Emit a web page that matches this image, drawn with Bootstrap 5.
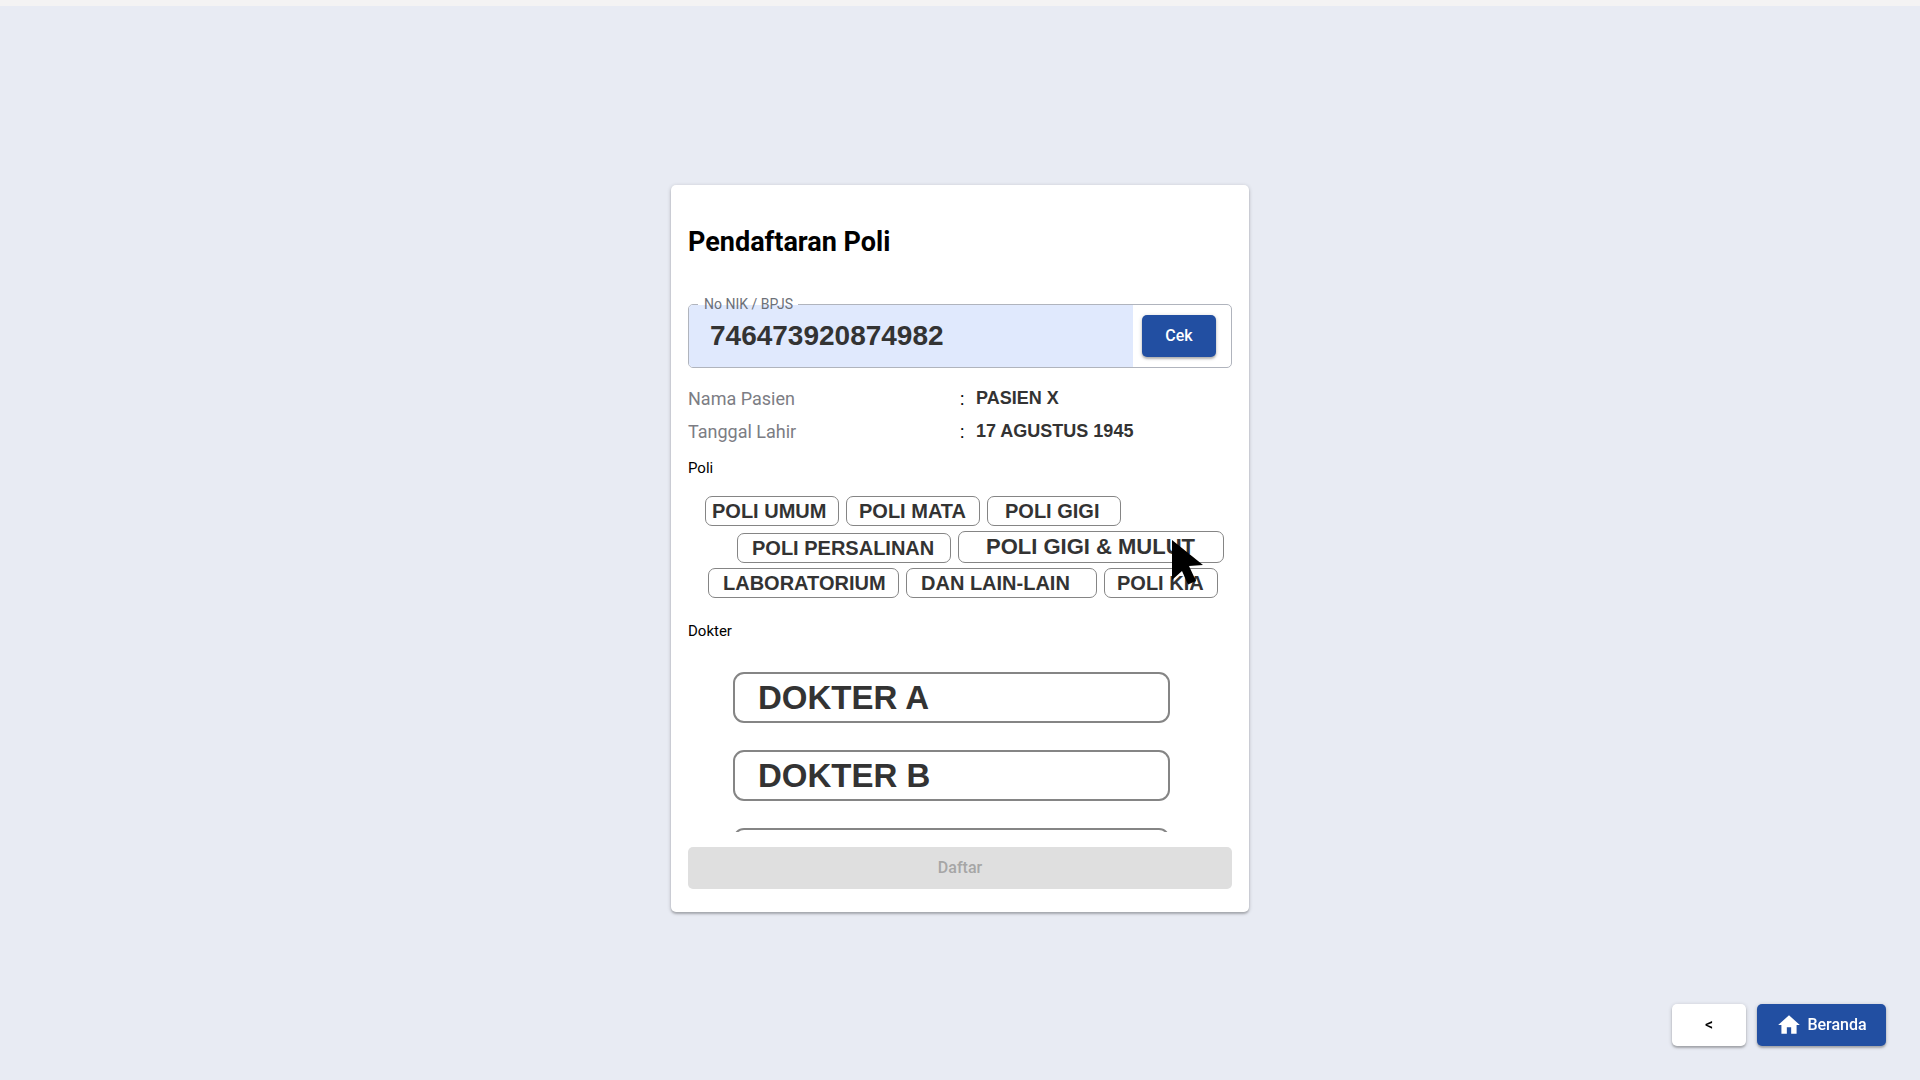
<!DOCTYPE html>
<html lang="id">
<head>
<meta charset="utf-8">
<meta name="viewport" content="width=device-width, initial-scale=1">
<title>Pendaftaran Poli</title>
<link href="https://cdn.jsdelivr.net/npm/bootstrap@5.3.0/dist/css/bootstrap.min.css" rel="stylesheet">
<style>
  body { background: #e8ebf3; color: #000; font-family: Roboto, "Liberation Sans", sans-serif; }
  .top-strip { height: 6px; background: #f4f3f3; }
  .stage { padding: 10px 16px 0; }
  .panel { width: 100%; max-width: 578px; padding: 35px 17px 23px; background: #fff; border-radius: 5px;
    box-shadow: 0 2px 2px rgba(0,0,0,.18), 0 1px 4px rgba(0,0,0,.2); }
  .panel-title { font-size: 27px; line-height: 44px; font-weight: 700; margin-bottom: 40px; }
  .data-text { font-family: "Liberation Sans", Arial, sans-serif; font-weight: 700; color: #333; }

  .nik-field { height: 64px; border: 1px solid #b0b4bd; border-radius: 5px; margin-bottom: 14px; }
  .nik-field label { top: -11px; left: 9px; padding: 0 5px 0 6px; font-size: 14px; line-height: 20px; color: #6c7078;
    background: linear-gradient(#fff 11px, #e0e9fd 11px); }
  .nik-input { min-width: 0; border: 0; border-radius: 4px 0 0 4px; background: #e0e9fd; padding: 0 21px; font-size: 28px; }
  .nik-side { width: 98px; padding-left: 9px; }

  .action { height: 42px; border: 0; border-radius: 5px; font-size: 16px; line-height: 24px; font-weight: 500; }
  .raised { box-shadow: 0 2px 2px rgba(0,0,0,.2), 0 1px 4px rgba(0,0,0,.2); }
  .action-blue, .action-blue:hover { background: #224fa2; color: #fff; }
  .action-white, .action-white:hover { background: #fff; color: #000; }
  .action-short { width: 74px; }
  .action:disabled { background: #dfdfdf; color: #a6a6a6; opacity: 1; }

  .facts { font-size: 18px; line-height: 33px; }
  .facts dt { width: 50%; font-weight: 400; color: #7c7d84; }
  .facts dd { margin: 0; }
  .facts .colon { width: 16px; }
  .group-title { font-size: 15px; line-height: 24px; font-weight: 400; }

  .choice { background: #fff; border: 1px solid #858585; text-align: left; white-space: nowrap; }
  .poli-list { padding: 16px 0 0 17px; gap: 5px; margin-bottom: 21px; }
  .poli-list .choice { height: 30px; border-radius: 7px; font-size: 20px; line-height: 24px; padding: 0; }
  .poli-row { gap: 7px; }
  .indent-lg { padding-left: 32px; }
  .indent-sm { padding-left: 3px; }
  .poli-list .w-s { width: 114px; }
  .poli-list .w-m { width: 134px; }
  .poli-list .w-l { width: 191px; }
  .poli-list .w-xl { width: 214px; }
  .poli-list .w-xxl { width: 266px; height: 32px; font-size: 22px; }
  .poli-list .in-a { padding-left: 6px; }
  .poli-list .in-b { padding-left: 12px; }
  .poli-list .in-c { padding-left: 14px; }
  .poli-list .in-d { padding-left: 17px; }
  .poli-list .in-e { padding-left: 27px; }
  .pointer { left: 214px; top: 9px; pointer-events: none; }

  .dokter-list { height: 160px; padding: 0 62px 0 45px; gap: 27px; margin: 29px 0 15px; }
  .dokter-list .choice { height: 51px; border-width: 2px; border-radius: 11px; font-size: 33px; line-height: 40px; padding: 2px 23px 0; }

  .corner { right: 34px; bottom: 34px; gap: 11px; }
  .home { width: 129px; gap: 5px; }
</style>
<script src="https://cdn.jsdelivr.net/npm/bootstrap@5.3.0/dist/js/bootstrap.bundle.min.js"></script>
</head>
<body class="d-flex flex-column min-vh-100">
<div class="top-strip"></div>
<main class="stage flex-grow-1 d-flex align-items-center justify-content-center">
  <form class="panel" onsubmit="return false">
    <h1 class="panel-title">Pendaftaran Poli</h1>

    <div class="nik-field position-relative d-flex">
      <input class="nik-input data-text flex-grow-1" id="nik" type="text" inputmode="numeric" value="746473920874982">
      <label class="position-absolute" for="nik">No NIK / BPJS</label>
      <div class="nik-side d-flex align-items-center">
        <button class="btn action action-short action-blue raised" type="button">Cek</button>
      </div>
    </div>

    <dl class="facts mb-0">
      <div class="d-flex"><dt>Nama Pasien</dt><dd class="d-flex"><span class="colon">:</span><span class="data-text">PASIEN X</span></dd></div>
      <div class="d-flex"><dt>Tanggal Lahir</dt><dd class="d-flex"><span class="colon">:</span><span class="data-text">17 AGUSTUS 1945</span></dd></div>
    </dl>

    <h2 class="group-title mt-2 mb-0">Poli</h2>
    <div class="poli-list d-flex flex-column">
      <div class="poli-row d-flex">
        <button class="choice data-text w-m in-a" type="button">POLI UMUM</button>
        <button class="choice data-text w-m in-b" type="button">POLI MATA</button>
        <button class="choice data-text w-m in-d" type="button">POLI GIGI</button>
      </div>
      <div class="poli-row indent-lg d-flex align-items-end">
        <button class="choice data-text w-xl in-c" type="button">POLI PERSALINAN</button>
        <div class="position-relative d-flex">
          <button class="choice data-text w-xxl in-e" type="button">POLI GIGI &amp; MULUT</button>
          <svg class="pointer position-absolute" width="32" height="46" viewBox="0 0 32 46" aria-hidden="true"><path d="M0 0V40L10 31L16 44.500L24 41L17 26L31 25Z" fill="#000"/></svg>
        </div>
      </div>
      <div class="poli-row indent-sm d-flex">
        <button class="choice data-text w-l in-c" type="button">LABORATORIUM</button>
        <button class="choice data-text w-l in-c" type="button">DAN LAIN-LAIN</button>
        <button class="choice data-text w-s in-b" type="button">POLI KIA</button>
      </div>
    </div>

    <h2 class="group-title mb-0">Dokter</h2>
    <div class="dokter-list d-flex flex-column overflow-hidden">
      <button class="choice data-text flex-shrink-0" type="button">DOKTER A</button>
      <button class="choice data-text flex-shrink-0" type="button">DOKTER B</button>
      <button class="choice flex-shrink-0" type="button" aria-label="Dokter"></button>
    </div>

    <button class="btn action w-100" type="submit" disabled>Daftar</button>
  </form>
</main>

<nav class="corner position-fixed d-flex" aria-label="Navigasi">
  <button class="btn action action-short action-white raised" type="button">&lt;</button>
  <a class="btn action action-blue home raised d-flex align-items-center justify-content-center p-0" href="#">
    <svg width="26" height="26" viewBox="0 0 24 24" fill="currentColor" aria-hidden="true"><path d="M10 20v-6h4v6h5v-8h3L12 3 2 12h3v8z"/></svg>
    Beranda
  </a>
</nav>
</body>
</html>
